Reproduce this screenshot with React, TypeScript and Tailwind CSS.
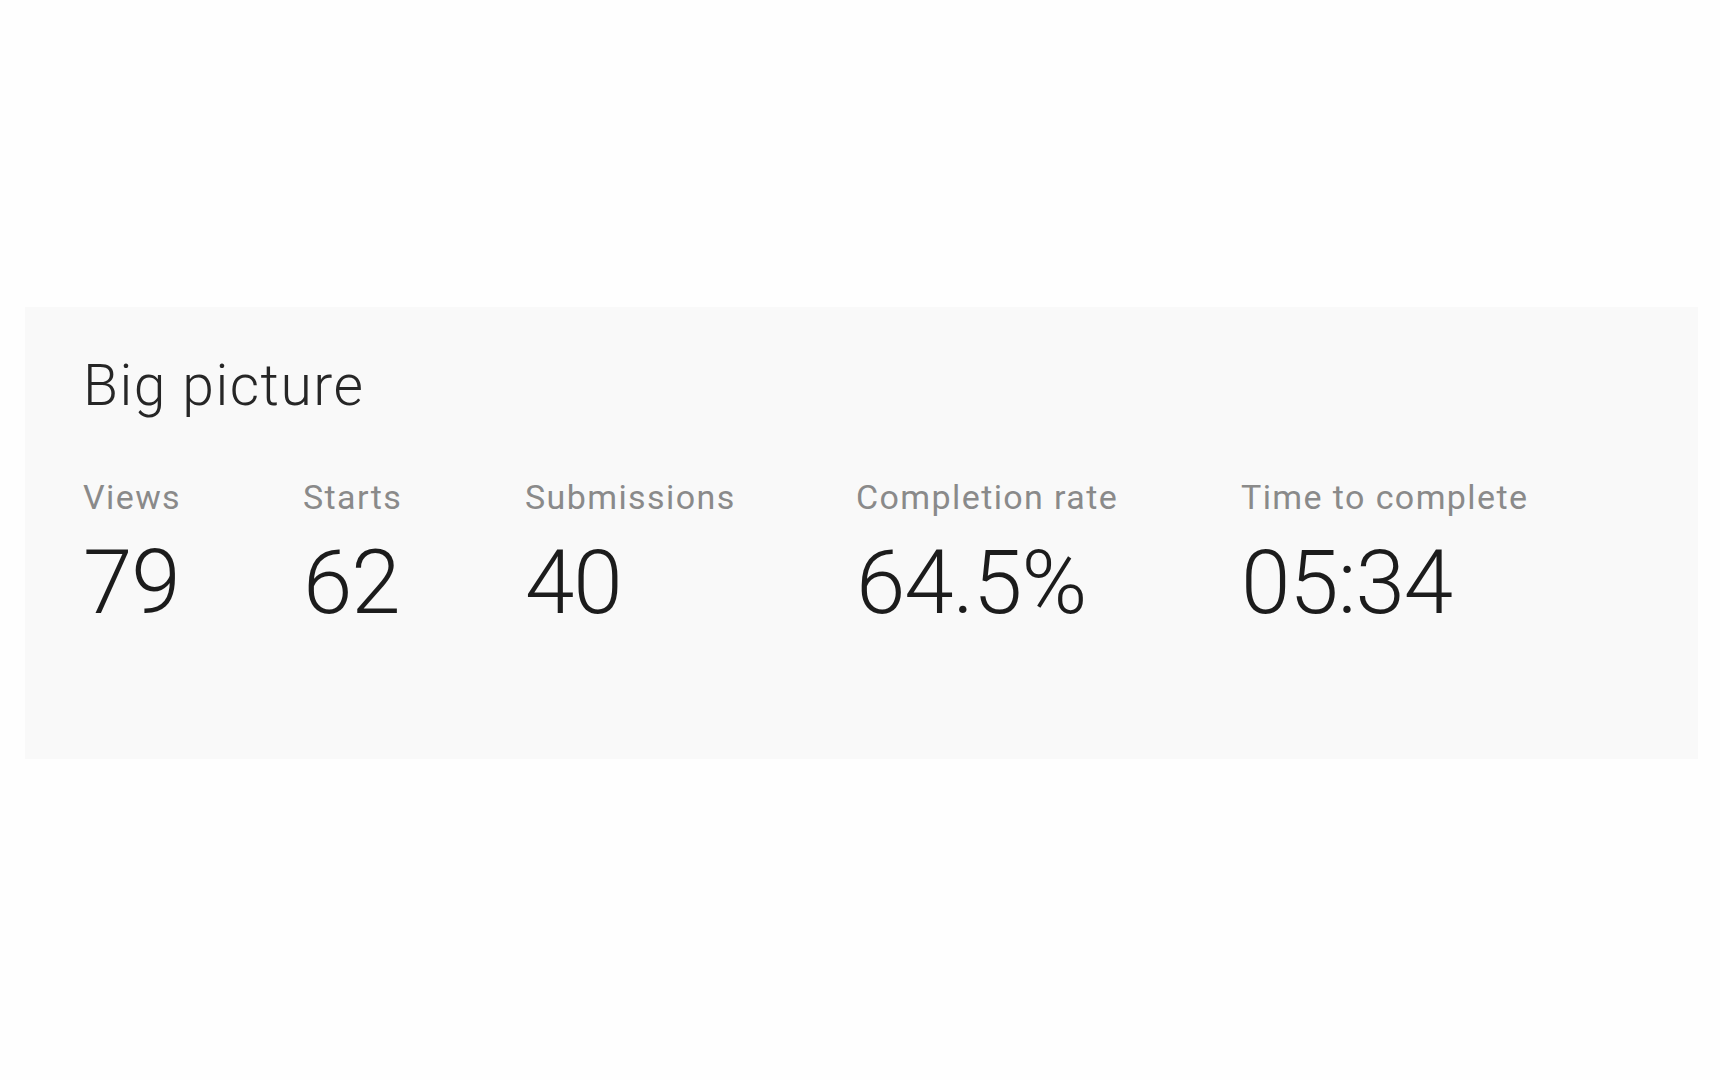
import React from "react";

const stats = [
  { label: "Views", value: "79", w: "w-[220px]" },
  { label: "Starts", value: "62", w: "w-[222px]" },
  { label: "Submissions", value: "40", w: "w-[331px]" },
  { label: "Completion rate", value: "64.5%", w: "w-[385px]" },
  { label: "Time to complete", value: "05:34", w: "w-[320px]" },
];

export default function App() {
  return (
    <div
      className="min-h-[1080px] w-[1720px] bg-[#fefefe] pt-[307px]"
      style={{ fontFamily: "Roboto, 'Liberation Sans', sans-serif" }}
    >
      <div className="ml-[25px] h-[452px] w-[1673px] bg-[#f9f9f9] pl-[58px] pt-[50px]">
        <h2 className="text-[57px] font-light leading-none tracking-[1.5px] text-[#262626]">Big picture</h2>
        <div className="mt-[66px] flex">
          {stats.map((s) => (
            <div key={s.label} className={`${s.w} flex shrink-0 flex-col`}>
              <div className="text-[34px] leading-none tracking-[1.4px] text-[#8a8a8a]">{s.label}</div>
              <div className="mt-[24px] text-[89px] font-light leading-none tracking-[-1px] text-[#1c1c1c]">
                {s.value}
              </div>
            </div>
          ))}
        </div>
      </div>
    </div>
  );
}
